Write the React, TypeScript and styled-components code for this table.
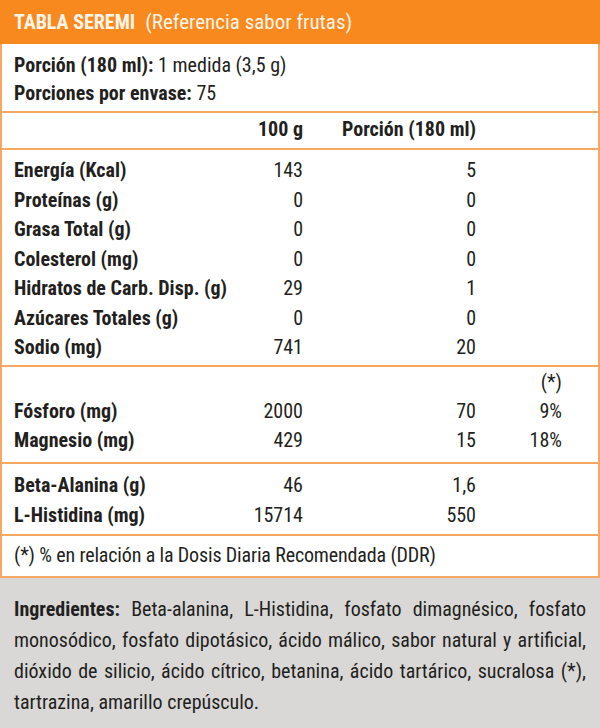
import React from "react";
import styled, { createGlobalStyle } from "styled-components";

const ORANGE = "#f7891f";
const LINE = "#f6a862";
const INK = "#231f20";

const GlobalStyle = createGlobalStyle`
  html, body {
    margin: 0;
    padding: 0;
    background: #ffffff;
  }
  body {
    font-family: "Roboto Condensed", Roboto, "Liberation Sans", sans-serif;
    font-stretch: 75%;
    color: ${INK};
  }
`;

const Sheet = styled.div`
  width: 600px;
  height: 728px;
  display: flex;
  flex-direction: column;
  background: #d9d8d7;
`;

const Title = styled.header`
  height: 44px;
  background: ${ORANGE};
  color: #fff4e8;
  display: flex;
  align-items: center;
  padding-left: 14px;
  font-size: 21px;
  b {
    font-weight: 700;
    font-size: 20px;
    margin-right: 10px;
  }
`;

const Table = styled.div`
  background: #ffffff;
  border-left: 2px solid ${LINE};
  border-right: 2px solid ${LINE};
  border-bottom: 2px solid ${LINE};
`;

const Section = styled.section<{ $top: number; $bottom: number; $first?: boolean }>`
  padding: ${(p) => p.$top}px 0 ${(p) => p.$bottom}px;
  border-top: ${(p) => (p.$first ? "none" : `2px solid ${LINE}`)};
`;

const Row = styled.div<{ $lh: number }>`
  display: grid;
  grid-template-columns: 219px 70px 173px 86px;
  padding: 0 36px 0 12px;
  font-size: 20px;
  line-height: ${(p) => p.$lh}px;
  white-space: nowrap;
`;

const Label = styled.div`
  font-weight: 700;
`;

const Num = styled.div<{ $bold?: boolean }>`
  text-align: right;
  font-weight: ${(p) => (p.$bold ? 700 : 400)};
`;

const Line = styled.div<{ $lh: number }>`
  padding-left: 12px;
  font-size: 20px;
  line-height: ${(p) => p.$lh}px;
  white-space: nowrap;
  b {
    font-weight: 700;
  }
`;

const Note = styled(Line)`
  letter-spacing: -0.15px;
`;

const Ingredients = styled.div`
  padding: 16px 14px 0;
  font-size: 20px;
  line-height: 31px;
  b {
    font-weight: 700;
  }
`;

const IngLine = styled.div<{ $last?: boolean }>`
  text-align: justify;
  text-align-last: ${(p) => (p.$last ? "left" : "justify")};
`;

type Item = [string, string, string, string?];

const nutrients: Item[] = [
  ["Energía (Kcal)", "143", "5"],
  ["Proteínas (g)", "0", "0"],
  ["Grasa Total (g)", "0", "0"],
  ["Colesterol (mg)", "0", "0"],
  ["Hidratos de Carb. Disp. (g)", "29", "1"],
  ["Azúcares Totales (g)", "0", "0"],
  ["Sodio (mg)", "741", "20"],
];

const minerals: Item[] = [
  ["Fósforo (mg)", "2000", "70", "9%"],
  ["Magnesio (mg)", "429", "15", "18%"],
];

const aminos: Item[] = [
  ["Beta-Alanina (g)", "46", "1,6"],
  ["L-Histidina (mg)", "15714", "550"],
];

const renderRows = (items: Item[], lh: number) =>
  items.map(([name, per100, portion, pct]) => (
    <Row key={name} $lh={lh}>
      <Label>{name}</Label>
      <Num>{per100}</Num>
      <Num>{portion}</Num>
      <Num>{pct ?? ""}</Num>
    </Row>
  ));

export default function App() {
  return (
    <>
      <GlobalStyle />
      <Sheet>
        <Title>
          <b>TABLA SEREMI</b>
          <span>(Referencia sabor frutas)</span>
        </Title>
        <Table>
          <Section $first $top={7} $bottom={4}>
            <Line $lh={28}>
              <b>Porción (180 ml):</b> 1 medida (3,5 g)
            </Line>
            <Line $lh={28}>
              <b>Porciones por envase:</b> 75
            </Line>
          </Section>
          <Section $top={2} $bottom={5}>
            <Row $lh={28}>
              <div />
              <Num $bold>100 g</Num>
              <Num $bold>Porción (180 ml)</Num>
              <div />
            </Row>
          </Section>
          <Section $top={6} $bottom={2}>
            {renderRows(nutrients, 29.5)}
          </Section>
          <Section $top={1} $bottom={7}>
            <Row $lh={29}>
              <div />
              <div />
              <div />
              <Num>(*)</Num>
            </Row>
            {renderRows(minerals, 29)}
          </Section>
          <Section $top={6} $bottom={4}>
            {renderRows(aminos, 30)}
          </Section>
          <Section $top={5} $bottom={7}>
            <Note $lh={28}>(*) % en relación a la Dosis Diaria Recomendada (DDR)</Note>
          </Section>
        </Table>
        <Ingredients>
          <IngLine>
            <b>Ingredientes:</b> Beta-alanina, L-Histidina, fosfato dimagnésico, fosfato
          </IngLine>
          <IngLine>monosódico, fosfato dipotásico, ácido málico, sabor natural y artificial,</IngLine>
          <IngLine>dióxido de silicio, ácido cítrico, betanina, ácido tartárico, sucralosa (*),</IngLine>
          <IngLine $last>tartrazina, amarillo crepúsculo.</IngLine>
        </Ingredients>
      </Sheet>
    </>
  );
}
